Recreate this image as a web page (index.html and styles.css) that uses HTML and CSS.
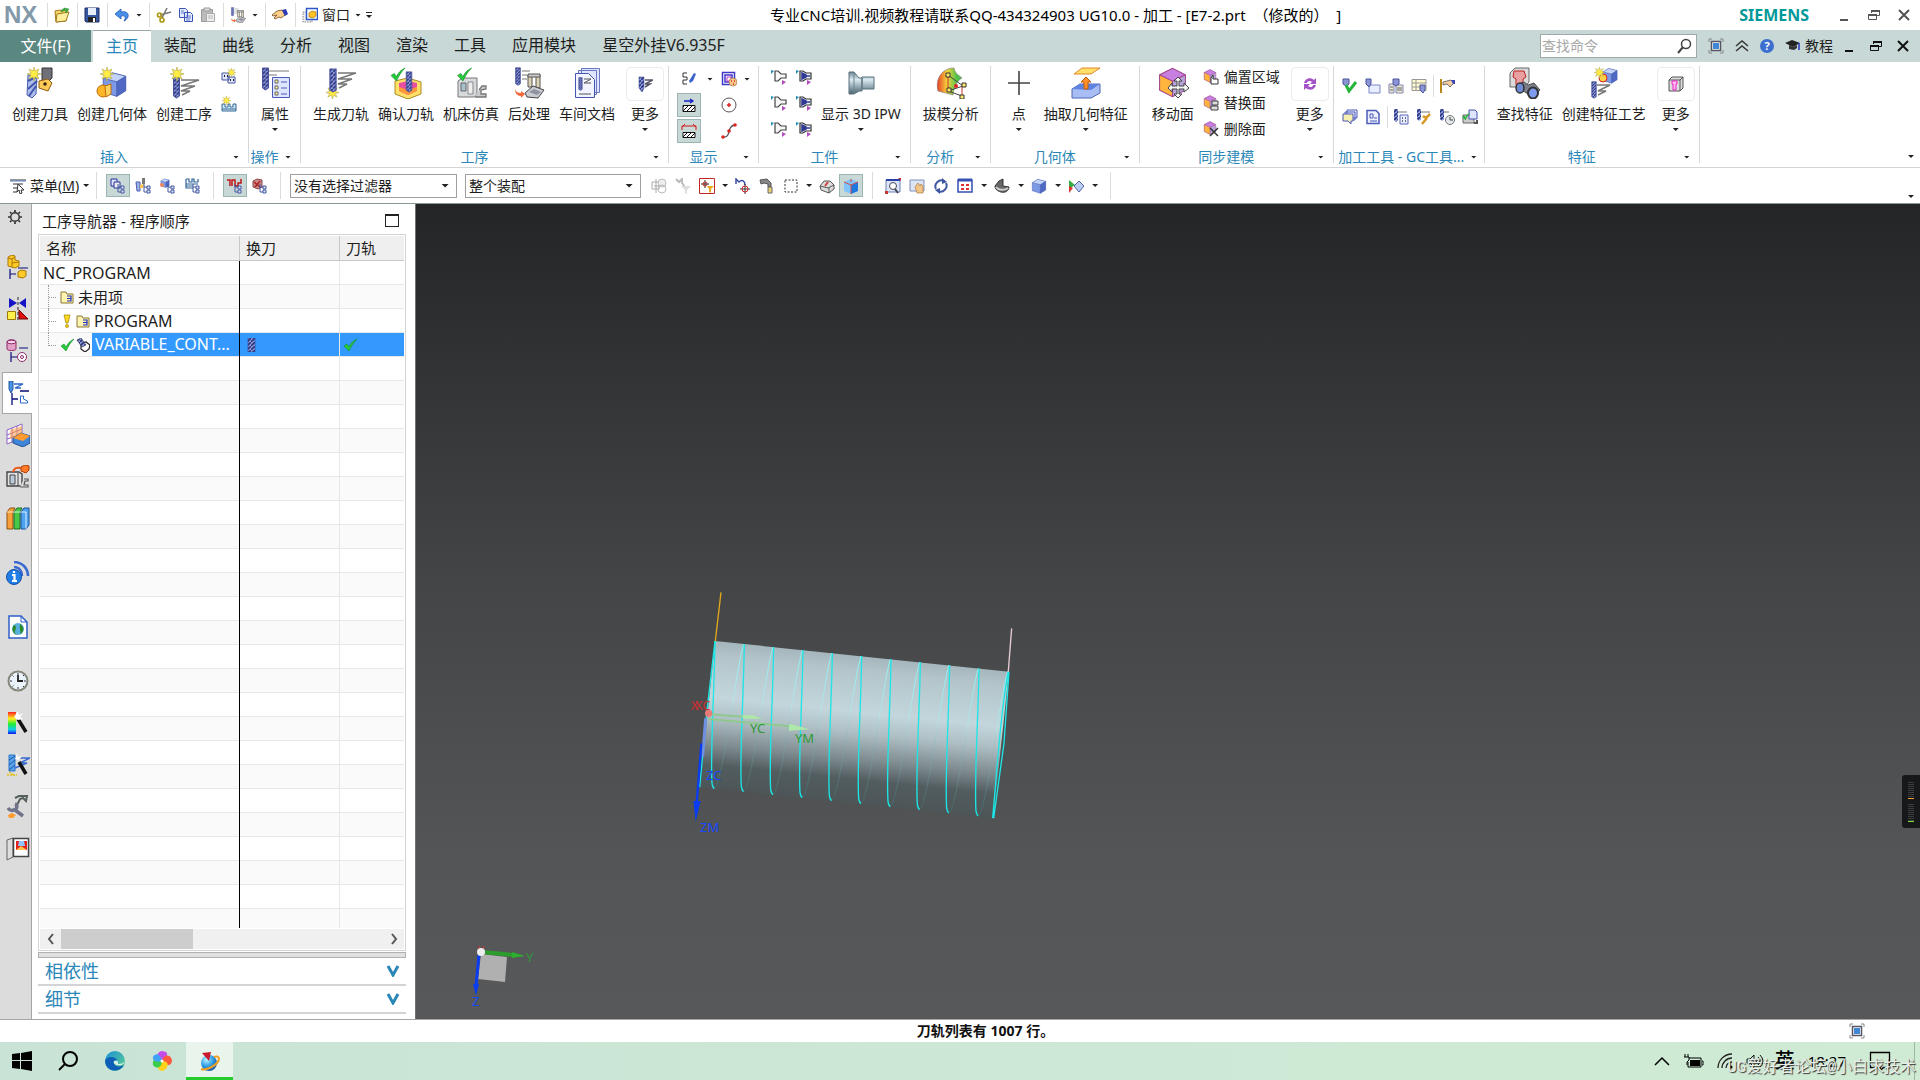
FILE: index.html
```html
<!DOCTYPE html>
<html lang="zh-CN">
<head>
<meta charset="utf-8">
<title>NX - 加工</title>
<link rel="stylesheet" href="styles.css">
</head>
<body>
<svg class="defs" width="0" height="0" aria-hidden="true">
<defs>
<pattern id="hatch" width="4" height="4" patternUnits="userSpaceOnUse"><rect width="4" height="4" fill="#8f9ad8"/><path d="M0 4L4 0" stroke="#29357f" stroke-width="1.6"/></pattern>
<pattern id="diag" width="4" height="4" patternUnits="userSpaceOnUse"><path d="M-1 5L5 -1M-1 1L1 -1M3 5L5 3" stroke="#111" stroke-width="1"/></pattern>
<linearGradient id="rain" x1="0" x2="1"><stop offset="0" stop-color="#e8402a"/><stop offset=".4" stop-color="#f5d53a"/><stop offset=".8" stop-color="#4fc04a"/></linearGradient>
<linearGradient id="rainv" x1="0" x2="0" y1="0" y2="1"><stop offset="0" stop-color="#f22"/><stop offset=".3" stop-color="#fe2"/><stop offset=".55" stop-color="#2e3"/><stop offset=".8" stop-color="#1ce"/><stop offset="1" stop-color="#11e"/></linearGradient>
<linearGradient id="steel" x1="0" x2="0" y1="0" y2="1"><stop offset="0" stop-color="#6b8593"/><stop offset=".35" stop-color="#dcebf1"/><stop offset="1" stop-color="#486471"/></linearGradient>
<radialGradient id="ball" cx=".35" cy=".3" r=".8"><stop offset="0" stop-color="#bdf3ff"/><stop offset=".5" stop-color="#2f9fe6"/><stop offset="1" stop-color="#12469c"/></radialGradient>
<linearGradient id="body" gradientUnits="userSpaceOnUse" x1="165" y1="213" x2="120" y2="652"><stop offset="0" stop-color="#a4b6bc"/><stop offset=".1" stop-color="#b3c5cb"/><stop offset=".38" stop-color="#c2d6db"/><stop offset=".52" stop-color="#afc0c5"/><stop offset=".7" stop-color="#7f8c90"/><stop offset=".84" stop-color="#525d60"/><stop offset="1" stop-color="#4d5557"/></linearGradient>
<linearGradient id="back" x1="0" x2="0" y1="0" y2="1"><stop offset="0" stop-color="#8cf3f3"/><stop offset=".4" stop-color="#b4e3e6"/><stop offset=".55" stop-color="#8fb5b9" stop-opacity=".5"/><stop offset="1" stop-color="#3f8184" stop-opacity=".4"/></linearGradient>
<linearGradient id="edgeg" x1="0" x2="1" y1="0" y2="1"><stop offset="0" stop-color="#1b8fd8"/><stop offset="1" stop-color="#5fd38a"/></linearGradient>
</defs>
<symbol id="star" viewBox="0 0 14 14"><path d="M7 0l1 4 4-2-2 4 4 1-4 1 2 4-4-2-1 4-1-4-4 2 2-4-4-1 4-1-2-4 4 2z" fill="#ffec45" stroke="#b0a34e" stroke-width=".6"/></symbol>
<symbol id="check" viewBox="0 0 14 14"><path d="M1 8l3-2 2 3c2-4 4-6 8-8-4 4-6 8-8 12z" fill="#22cc3a" stroke="#178c28" stroke-width=".6"/></symbol>
<symbol id="mill" viewBox="0 0 8 24"><path d="M1 1h6v20l-3 2-3-2z" fill="url(#hatch)" stroke="#4a549b"/></symbol>
<symbol id="lines" viewBox="0 0 20 18"><path d="M1 2h18L1 8h14L1 13h9L2 17" fill="none" stroke="#777" stroke-width="1.4"/></symbol>
<symbol id="cube" viewBox="0 0 24 24"><path d="M2 7l8-5 12 3v13l-8 5-12-4z" fill="#7d99e6"/><path d="M2 7l8-5 12 3-8 5z" fill="#c3d3fa"/><path d="M14 10l8-5v13l-8 5z" fill="#4e68c4"/><path d="M2 7l8-5 12 3v13l-8 5-12-4zM2 7l12 3 8-5M14 10v13" fill="none" stroke="#4c61ad" stroke-width=".8"/></symbol>
<symbol id="facecube" viewBox="0 0 24 24"><path d="M2 6l10-5 10 5v12l-10 5-10-5z" fill="#b5a3d9"/><path d="M2 6l10-5 10 5-10 5z" fill="#c77fe0"/><path d="M2 6l10 5v12l-10-5z" fill="#ffb43d"/><path d="M2 6l10-5 10 5v12l-10 5-10-5zM2 6l10 5 10-5M12 11v12" fill="none" stroke="#a1448c" stroke-width=".8"/></symbol>
<symbol id="node" viewBox="0 0 16 16"><path d="M8 6v8h3M8 9h3" fill="none" stroke="#45599f"/><path d="M11 8h3v3h-3zM11 12h3v3h-3z" fill="#dbe3ff" stroke="#45599f"/></symbol>
<symbol id="open" viewBox="0 0 16 16"><path d="M1 4l5-1 2 1 5-1-1 11-10 1z" fill="#f7d66a" stroke="#a4781d"/><path d="M3 7l12-2-3 9-10 1z" fill="#ffef9c" stroke="#a4781d"/><path d="M7 5c0-3 3-4 4-3l-1-1 5 1-3 4V4c-2-1-3 0-5 1z" fill="#3fb341" stroke="#27822b" stroke-width=".5"/></symbol>
<symbol id="save" viewBox="0 0 16 16"><path d="M1 1h14v14H2l-1-1z" fill="#35589f" stroke="#1c2f66"/><path d="M4 1h8v7H4z" fill="#e8eef9"/><path d="M4 10h8v5H4z" fill="#222"/><path d="M9 11h2v4H9z" fill="#fff"/></symbol>
<symbol id="undo" viewBox="0 0 16 16"><path d="M1 7l6-5v3c5-1 8 1 7 5-1 2-3 4-4 4 2-3 2-6-3-5v3z" fill="#4a90e8" stroke="#1e55b0" stroke-width=".8"/></symbol>
<symbol id="cut" viewBox="0 0 16 16"><path d="M11 1L6 11M15 5L4 8" stroke="#777" stroke-width="1.6"/><circle cx="3.500" cy="8" r="2" fill="none" stroke="#b19a18" stroke-width="1.700"/><circle cx="6" cy="13" r="2" fill="none" stroke="#b19a18" stroke-width="1.700"/></symbol>
<symbol id="copy" viewBox="0 0 16 16"><path d="M1.500 1.500h6l2 2v7h-8zM6.500 5.500h6l2 2v7h-8z" fill="#e6ecff" stroke="#3a55b4"/><path d="M8 9h5M8 11h5M8 13h4M3 4h3M3 6h3" stroke="#5c77cc"/></symbol>
<symbol id="paste" viewBox="0 0 16 16"><path d="M1.500 2.500h11v12h-11z" fill="#bbb" stroke="#999"/><path d="M4 1h6v3H4z" fill="#ddd" stroke="#999"/><path d="M6.500 6.500h8v8h-8z" fill="#eee" stroke="#aaa"/><path d="M8 9h5M8 11h5" stroke="#bbb"/></symbol>
<symbol id="post" viewBox="0 0 32 32"><use href="#mill" x="1" y="0" width="8" height="19"/><path d="M9 4h8M9 8h5M9 12h5" stroke="#777"/><path d="M2 22c1 3 3 4 6 4v-2l4 3-4 4v-2c-4 0-6-3-6-7z" fill="#f4683a"/><path d="M15 8h4v12h-4zM23 8h4v13h-4z" fill="#ddd4b8" stroke="#555"/><path d="M15 7h12v3H15z" fill="#ccc" stroke="#555"/><path d="M12 26l8-7 11 4-6 8-11-1z" fill="#c9cbd2" stroke="#444"/><path d="M16 25l5-3 7 3-4 3z" fill="#8f939e"/></symbol>
<symbol id="hand" viewBox="0 0 16 16"><path d="M0 8l5-4 5-1 3 5-4 3-2-1-4 2-1-1 3-3-4 1z" fill="#ffcf8c" stroke="#6d4a20" stroke-width=".8"/><path d="M10 3l4-1 2 5-3 2z" fill="#2b3bb5"/></symbol>
<symbol id="win" viewBox="0 0 16 16"><path d="M1 5h9v10H1z" fill="#eee" stroke="#888" stroke-dasharray="1.500 1"/><path d="M4.500 1.500h11v11h-11z" fill="#fff" stroke="#2e57c8" stroke-width="1.500"/><path d="M7 6l3-2 4 1v4l-3 2-4-1z" fill="#ffc425" stroke="#a97308" stroke-width=".7"/></symbol>
<symbol id="restore" viewBox="0 0 14 12"><path d="M4.500 4V1.500h8v5H9M1.500 5.500h8v5h-8z" fill="none" stroke="currentColor"/><path d="M4 2h9M1 6h9" stroke="currentColor" stroke-width="2"/></symbol>
<symbol id="close" viewBox="0 0 12 12"><path d="M1 1l10 10M11 1L1 11" stroke="currentColor" stroke-width="2"/></symbol>
<symbol id="full" viewBox="0 0 16 16"><path d="M1 4V1h3M12 1h3v3M15 12v3h-3M4 15H1v-3" fill="none" stroke="#888"/><path d="M3.500 3.500h9v9h-9z" fill="#fff" stroke="#556" stroke-width="1.500"/><path d="M5 5h6v6H5z" fill="#3f86d4"/></symbol>
<symbol id="tool" viewBox="0 0 32 32"><path d="M18 1h10v10l-3 3h-7z" fill="#6f7078" stroke="#333"/><path d="M15 14l9-2 4 4-4 8-9-3z" fill="#ffcb58" stroke="#8c5a12"/><circle cx="21" cy="17" r="1.800" fill="#3a2a12"/><path d="M4 8h9l-1 19-4 4-5-3z" fill="#aebeea" stroke="#4a5cae"/><path d="M4 14l8-4M4 22l9-8M5 29l7-10" stroke="#3e54ad" stroke-width="2"/><use href="#star" x="3" y="0" width="14" height="14"/></symbol>
<symbol id="geom" viewBox="0 0 32 32"><use href="#cube" x="5" y="3" width="27" height="28"/><circle cx="7" cy="24" r="6" fill="#ffb52a" stroke="#bd6b0b"/><path d="M9 19l6-2v10l-5 3z" fill="#ffd362" stroke="#bd6b0b"/><use href="#star" x="4" y="0" width="14" height="14"/></symbol>
<symbol id="oper" viewBox="0 0 32 32"><use href="#mill" x="4" y="8" width="9" height="24"/><use href="#lines" x="12" y="11" width="20" height="18"/><use href="#star" x="2" y="0" width="14" height="14"/></symbol>
<symbol id="sm1" viewBox="0 0 16 16"><path d="M1 5h7v7H1zM7 9h7v6H7z" fill="#dfe6fb" stroke="#46599f"/><path d="M3 8h1m2 0h1M9 12h1m2 0h1" stroke="#223" stroke-width="2"/><use href="#star" x="6" y="0" width="9" height="9"/></symbol>
<symbol id="sm2" viewBox="0 0 16 16"><path d="M1 8h3v3h3V8h2v3h3V8h3v7H1z" fill="#cfe7f3" stroke="#356b96"/><path d="M1 13h14" stroke="#356b96"/><use href="#star" x="1" y="0" width="9" height="9"/></symbol>
<symbol id="props" viewBox="0 0 32 32"><use href="#mill" x="2" y="0" width="9" height="24"/><path d="M10 4h20M10 8h8" stroke="#777"/><path d="M13.500 10.500h17v20h-17z" fill="#dfe5ff" stroke="#4b5bb8"/><path d="M16 13h3v3h-3zM16 19h3v3h-3zM16 25h3v3h-3z" fill="#fff3a0" stroke="#666"/><path d="M22 15h6M22 21h6M22 27h6" stroke="#4b5bb8"/></symbol>
<symbol id="gen" viewBox="0 0 32 32"><use href="#star" x="1" y="19" width="13" height="13"/><use href="#mill" x="3" y="1" width="10" height="25"/><use href="#lines" x="12" y="4" width="20" height="18"/></symbol>
<symbol id="verify" viewBox="0 0 32 32"><path d="M5 14l13-3 13 4v12l-13 5-13-5z" fill="#ffe169" stroke="#a98a22"/><path d="M9 16l9-2 9 2v8l-9 4-9-4z" fill="#e84fa0"/><path d="M9 20l9 3 9-3v4l-9 4-9-4z" fill="#ff9a34"/><use href="#mill" x="15" y="4" width="8" height="22"/><use href="#check" x="0" y="0" width="15" height="15"/></symbol>
<symbol id="sim" viewBox="0 0 32 32"><path d="M3 14l4-3h15v17l-3 2H3z" fill="#d6dadc" stroke="#777"/><path d="M6 16h5v8H6z" fill="#a9c1cc" stroke="#666"/><path d="M13 15h5v12h-5z" fill="#eee" stroke="#888"/><path d="M20 30h11v-3h-5v-4l5-1v-3h-4l-3 4" fill="#ccc" stroke="#777" stroke-width="1.300"/><use href="#check" x="1" y="0" width="16" height="15"/></symbol>
<symbol id="doc" viewBox="0 0 32 32"><path d="M10.500 1.500h18v24h-18zM7.500 3.500h18v24h-18z" fill="#dfe5ff" stroke="#6a78c4"/><path d="M4.500 6.500h13l6 6v18h-19z" fill="#f2f4ff" stroke="#4454b0"/><use href="#mill" x="7" y="10" width="5" height="14"/><path d="M13 12h7l-7 4h7M8 27h12" fill="none" stroke="#555"/></symbol>
<symbol id="more1" viewBox="0 0 16 16"><path d="M2 1h5v11l-2 4-3-4z" fill="url(#hatch)" stroke="#4a549b" stroke-width=".6"/><path d="M8 4h8l-8 4h5l-5 3" fill="none" stroke="#556" stroke-width="1.500"/></symbol>
<symbol id="edit" viewBox="0 0 16 16"><path d="M6 2H2v4h4v3H2v4h4" fill="none" stroke="#333"/><path d="M8 10l5-8 2 1-3 7-3 2z" fill="#3d65cf"/></symbol>
<symbol id="palette" viewBox="0 0 16 16"><path d="M1.500 1.500h12v12h-12zM4 4h7v7H4z" fill="#fff" stroke="#4037c9" stroke-width="1.500"/><path d="M6 6h4v4H6z" fill="none" stroke="#c23cc0"/><circle cx="12" cy="11" r="4" fill="#f5c98a" stroke="#a06b35" stroke-width=".6"/><path d="M10 10h1m2 0h1m-2 3h1" stroke="#d22" stroke-width="1.500"/></symbol>
<symbol id="tg1" viewBox="0 0 16 16"><path d="M2 8.500h12v6H2z" fill="#fff"/><path d="M2 8.500h12v6H2z" fill="url(#diag)" stroke="#111"/><path d="M3 4h9m-3-2l3 2-3 2" fill="none" stroke="#1622c8" stroke-width="1.300"/></symbol>
<symbol id="tg2" viewBox="0 0 16 16"><path d="M2 9.500h12v5H2z" fill="#fff"/><path d="M2 9.500h12v5H2z" fill="url(#diag)" stroke="#111"/><path d="M1 7V3h14v4M4 1L1 4M12 1l3 3" fill="none" stroke="#d01818"/></symbol>
<symbol id="circ" viewBox="0 0 16 16"><circle cx="8" cy="8" r="7" fill="none" stroke="#555"/><path d="M8 6v4M6 8h4" stroke="#d22" stroke-width="1.500"/></symbol>
<symbol id="curve" viewBox="0 0 16 16"><path d="M2 14c9 1 3-11 12-12" fill="none" stroke="#555" stroke-width="1.300"/><circle cx="2" cy="14" r="1.800" fill="#d22"/><circle cx="8" cy="8" r="1.800" fill="#d22"/><circle cx="14" cy="2" r="1.800" fill="#d22"/></symbol>
<symbol id="wp" viewBox="0 0 16 16"><path d="M4 2h3l3 3h5v4h-5l-3 3H4z" fill="#f7f7f7" stroke="#444" stroke-width="1.200"/><path d="M0 1l3 1-3 3z" fill="#278eb8"/><path d="M11 11l4 2-4 3z" fill="#b44bc0"/></symbol>
<symbol id="wp2" viewBox="0 0 16 16"><path d="M4 2h3l3 2h5v6h-5l-3 2H4z" fill="#f2f4fb" stroke="#333" stroke-width="1.200"/><path d="M6 4l4 2v2l-4 2zM10 7h4" fill="#303a94" stroke="#303a94" stroke-width="1.500"/><path d="M0 1l3 1-3 3z" fill="#278eb8"/><path d="M11 11l4 2-4 3z" fill="#b44bc0"/></symbol>
<symbol id="ipw" viewBox="0 0 32 32"><path d="M4 5h5l5 6h3v13h-3l-5 3H4zM17 10h12v12H17z" fill="url(#steel)" stroke="#59717c"/><path d="M9 5v22M17 10v13" stroke="#71878f"/></symbol>
<symbol id="draft" viewBox="0 0 32 32"><path d="M3 24C0 12 7 1 19 1c1 6 6 8 8 10-5 3-8 8-9 17z" fill="url(#rain)" stroke="#777" stroke-width=".6"/><path d="M13 8l15 11-15 5 14 5" fill="none" stroke="#444"/><path d="M13 8v16M27 19v10" stroke="#c33"/><path d="M11 6h4v4h-4zM27 16h4v4h-4zM12 21h4v4h-4zM25 28h4v4h-4z" fill="#ffec6b" stroke="#333"/><circle cx="21" cy="19" r="2" fill="#d22"/></symbol>
<symbol id="plus" viewBox="0 0 32 32"><path d="M16 4v24M5 16h22" stroke="#444" stroke-width="1.600"/></symbol>
<symbol id="extract" viewBox="0 0 32 32"><path d="M4 7l8-6h18l-9 6z" fill="#ffe169" stroke="#e0852c"/><path d="M2 22l8-5h20v9l-9 5H2z" fill="#a9bdf5" stroke="#4a66b5"/><path d="M2 22l8-5h20l-9 6z" fill="#5f83e0"/><path d="M14 22v-7h-3l5-5 5 5h-3v7z" fill="#ff8e2b" stroke="#bf5a0a"/></symbol>
<symbol id="move" viewBox="0 0 32 32"><use href="#facecube" x="0" y="0" width="31" height="31"/><path d="M21 10l4 4h-3v5h5v-3l5 5-5 4v-3h-5v5h3l-4 4-4-4h3v-5h-5v3l-4-4 4-5v3h5v-5h-3z" fill="#f4f4f4" stroke="#444"/></symbol>
<symbol id="off" viewBox="0 0 16 16"><use href="#facecube" x="0" y="0" width="14" height="14"/><path d="M8 15V9l2-3v4h5v5z" fill="#fff" stroke="#333"/></symbol>
<symbol id="repl" viewBox="0 0 16 16"><use href="#facecube" x="0" y="0" width="14" height="14"/><path d="M9 6h6v4H9zM8 11h7v4H8z" fill="#ddd" stroke="#444"/></symbol>
<symbol id="del" viewBox="0 0 16 16"><use href="#facecube" x="0" y="0" width="14" height="14"/><path d="M7 7l8 8M15 7l-8 8" stroke="#333" stroke-width="1.500"/></symbol>
<symbol id="sync" viewBox="0 0 16 16"><path d="M2 7c1-5 7-6 10-3l2-2v6H8l2-2C8 4 5 5 5 7zM14 9c-1 5-7 6-10 3l-2 2V8h6l-2 2c2 2 5 1 5-1z" fill="#a552c6"/></symbol>
<symbol id="g1" viewBox="0 0 16 16"><path d="M1 1h6v5L4 8 1 6z" fill="#8b95d6" stroke="#4a549b"/><path d="M4 7l3 6 7-9" fill="none" stroke="#25b53a" stroke-width="3"/></symbol>
<symbol id="g2" viewBox="0 0 16 16"><path d="M4 7h11v8H4z" fill="#e8edff" stroke="#7a87c7"/><path d="M1 1h5v5L4 9 1 6z" fill="#8b95d6" stroke="#4a549b"/></symbol>
<symbol id="g3" viewBox="0 0 16 16"><path d="M1 6h5v9H1zM8 7h7v8H8z" fill="#eee9cf" stroke="#7f86b5"/><path d="M2 9h3M2 12h3M9 10h5M9 12h5" stroke="#667"/><path d="M5 1h6v5L8 8 5 6z" fill="#8b95d6" stroke="#4a549b"/></symbol>
<symbol id="g4" viewBox="0 0 16 16"><path d="M1 1.500h14v11H1zM1 5h14M1 9h14M5 2v11" fill="#fff9cf" stroke="#999"/><path d="M9 7h5v5l-2 3-3-3z" fill="#8b95d6" stroke="#4a549b"/></symbol>
<symbol id="g5" viewBox="0 0 16 16"><path d="M2 1v14" stroke="#b88616" stroke-width="2"/><path d="M4 4l8-2 3 3-4 4-3-3-4 1z" fill="#f3cda0" stroke="#555" stroke-width=".8"/><path d="M12 2l4 0v4h-2z" fill="#3b49b8"/></symbol>
<symbol id="g6" viewBox="0 0 16 16"><path d="M5 1h10v8H5zM3 3h10v8H3z" fill="#eef" stroke="#4b5bb8"/><path d="M1 5h10v7H9v3l-3-3H1z" fill="#f5efb0" stroke="#4b5bb8"/></symbol>
<symbol id="g7" viewBox="0 0 16 16"><path d="M2 1.500h9l3 3v10H2z" fill="#eef0ff" stroke="#4b5bb8" stroke-width="1.500"/><path d="M5 5h3v4H5zM9 9h3M5 12h7" fill="none" stroke="#4b5bb8"/></symbol>
<symbol id="g8" viewBox="0 0 16 16"><path d="M1 0h4v11l-2 2-2-2z" fill="url(#hatch)"/><path d="M5 3h9" stroke="#777"/><path d="M7 6h8v9H7z" fill="#e8edff" stroke="#5b69b8"/><path d="M9 9h1m2 0h1M9 12h1m2 0h1" stroke="#445" stroke-width="1.500"/></symbol>
<symbol id="g9" viewBox="0 0 16 16"><path d="M1 0h4v10l-2 2-2-2z" fill="url(#hatch)"/><path d="M5 3h9" stroke="#777"/><path d="M7 7c3 3 5 0 7-2M11 9l-5 6" fill="none" stroke="#d79a28" stroke-width="2.500"/></symbol>
<symbol id="g10" viewBox="0 0 16 16"><path d="M1 0h4v10l-2 2-2-2z" fill="url(#hatch)"/><path d="M5 3h5" stroke="#777"/><circle cx="11" cy="11" r="4.500" fill="#e4eaec" stroke="#777"/><path d="M11 8v3h3" fill="none" stroke="#444"/></symbol>
<symbol id="g11" viewBox="0 0 16 16"><path d="M1 6h11v8H1z" fill="#ccc" stroke="#666"/><path d="M7 1h6l2 2v7H7z" fill="#dfe5ff" stroke="#4454b0"/><use href="#check" x="0" y="3" width="8" height="9"/><path d="M12 14h3v-3" fill="none" stroke="#555" stroke-width="2"/></symbol>
<symbol id="find" viewBox="0 0 32 32"><path d="M1 6l5-5h14v14l-4 5H1z" fill="#dadada" stroke="#666"/><path d="M5 4h10l2 6-3 2v6H7v-6l-3-2z" fill="#e9a0a0" stroke="#b22"/><path d="M9 17l6-2 4 3 6-2 6 7-8 7-7-5-6-2z" fill="#7c808c" stroke="#333" stroke-width=".8"/><ellipse cx="11" cy="21" rx="4" ry="5" fill="#6f8bd6" stroke="#333" stroke-width="1.500"/><ellipse cx="24" cy="26" rx="5" ry="5.500" fill="#7f9bf0" stroke="#333" stroke-width="2"/></symbol>
<symbol id="craft" viewBox="0 0 32 32"><use href="#mill" x="2" y="14" width="8" height="18"/><path d="M9 18h13l-12 6h8l-8 4" fill="none" stroke="#777" stroke-width="1.400"/><use href="#cube" x="13" y="0" width="18" height="17"/><circle cx="15" cy="11" r="4" fill="#ffd04a" stroke="#c22"/><use href="#star" x="6" y="0" width="11" height="11"/></symbol>
<symbol id="feat" viewBox="0 0 16 16"><path d="M1 4l3-3h11v11l-3 3H1z" fill="#ddd" stroke="#555"/><path d="M12 4v11M1 4h11l3-3" fill="none" stroke="#555"/><path d="M4 5h5v3H8v6H5V8H4z" fill="#fbe" stroke="#e2c"/></symbol>
<symbol id="menu" viewBox="0 0 16 16"><path d="M0 2h16M3 6h10M3 10h4M3 14h4" stroke="#777" stroke-width="1.600"/><path d="M0 3h16" stroke="#5b84c9"/><path d="M8 6l6 6h-3l1 3-2 1-1-4-2 2z" fill="#fff" stroke="#333"/></symbol>
<symbol id="s1" viewBox="0 0 16 16"><path d="M1 1h6v7H1z" fill="#dfe5ff" stroke="#26309b"/><path d="M4 4h6v6H4z" fill="#eee" stroke="#26309b"/><use href="#node"/></symbol>
<symbol id="s2" viewBox="0 0 16 16"><path d="M7 0h3v6H7z" fill="#777"/><path d="M1 4h4v9H2z" fill="#9fb3e8" stroke="#4a5cae"/><path d="M5 7l4-1-1 4H5z" fill="#ffc44f"/><use href="#node" x="1" y="0" width="16" height="16"/></symbol>
<symbol id="s3" viewBox="0 0 16 16"><use href="#cube" x="0" y="0" width="10" height="10"/><circle cx="2" cy="7" r="2" fill="#f08a5a"/><use href="#node"/></symbol>
<symbol id="s4" viewBox="0 0 16 16"><path d="M1 1h3v3h3V1h2v3h4V1M1 1v9h7M1 6h12M1 8h7" fill="none" stroke="#30629a" stroke-width="1.200"/><use href="#node"/></symbol>
<symbol id="s5" viewBox="0 0 16 16"><path d="M0 2h3v6M5 8V2h3v6h3V5h3V1" fill="none" stroke="#c01616" stroke-width="1.500"/><use href="#node"/></symbol>
<symbol id="s6" viewBox="0 0 16 16"><path d="M1 3l4-2 5 1v7l-4 2-5-2z" fill="#c98a8a" stroke="#8a4a4a"/><path d="M2 4l6 5M8 3L3 9" stroke="#a22" stroke-width="1.500"/><use href="#node"/></symbol>
<symbol id="s7" viewBox="0 0 16 16"><path d="M5 1v14M1 4h7v7H1zM3 8h10" fill="none" stroke="#aaa"/><circle cx="11" cy="5" r="4" fill="#eee" stroke="#bbb"/><circle cx="11" cy="11" r="4" fill="none" stroke="#bbb"/></symbol>
<symbol id="s8" viewBox="0 0 16 16"><path d="M1 1l3 3 3-3v4l3 4" fill="none" stroke="#bbb" stroke-width="2"/><path d="M6 8h10l-4 4v4l-2-1v-3z" fill="#ddd"/></symbol>
<symbol id="s9" viewBox="0 0 16 16"><path d="M.500.500h15v15H.500z" fill="#fff" stroke="#c22828"/><path d="M6 2v8M2 6h8" stroke="#333"/><circle cx="6" cy="6" r="2" fill="none" stroke="#c22"/><path d="M8 8h7l-3 3v4l-2-1v-3z" fill="#e9a91f"/></symbol>
<symbol id="s10" viewBox="0 0 16 16"><path d="M1 6V1l3 3c3-3 6-1 6 3" fill="none" stroke="#3b4da3" stroke-width="1.500"/><path d="M10 6v10M5 11h10" stroke="#333"/><circle cx="10" cy="11" r="3" fill="none" stroke="#c22"/></symbol>
<symbol id="s11" viewBox="0 0 16 16"><path d="M1 2l7-1 4 4v4H9V6L5 5 2 6z" fill="#888" stroke="#555"/><path d="M9 9h4v6H9z" fill="#e8d075" stroke="#666"/></symbol>
<symbol id="s12" viewBox="0 0 16 16"><path d="M2 2h12v12H2z" fill="none" stroke="#333" stroke-dasharray="2 1.500"/></symbol>
<symbol id="s13" viewBox="0 0 16 16"><path d="M1 8l4-5h6l4 4v4l-5 4-8-3z" fill="#ddd" stroke="#555"/><path d="M1 8l8 2 6-3M10 10v5" fill="none" stroke="#555"/><path d="M9 4l-3 4" stroke="#c44" stroke-width="2"/></symbol>
<symbol id="s14" viewBox="0 0 16 16"><path d="M1 4l7-3 7 3v9l-7 3-7-3z" fill="#7fc4fa"/><path d="M8 7l7-3v9l-7 3z" fill="#1f78e0"/><path d="M1 4l7 3 7-3M8 7v9M8 1v3" fill="none" stroke="#d34a4a"/></symbol>
<symbol id="v1" viewBox="0 0 16 16"><path d="M1 2h14v12H1z" fill="#dbe6f8" stroke="#6a7fb5"/><circle cx="8" cy="8" r="3.500" fill="#fff" stroke="#445"/><path d="M10 11l3 4" stroke="#445" stroke-width="2"/><path d="M0 13h3v3H0zM13 0h3v3" fill="#c33"/><path d="M1 2h14" stroke="#2b3fa6" stroke-width="2"/></symbol>
<symbol id="v2" viewBox="0 0 16 16"><path d="M1 2h14v11H1z" fill="#dce4f4" stroke="#7f8fb8"/><path d="M6 9l2 6h6V8l-2-2-1 2-2-3z" fill="#f1c588" stroke="#a9793d" stroke-width=".7"/></symbol>
<symbol id="v3" viewBox="0 0 16 16"><path d="M3 11a6 6 0 0 1 8-8M13 5a6 6 0 0 1-8 8" fill="none" stroke="#3f57a4" stroke-width="2"/><path d="M9 0l5 4-5 2zM7 10l-5 2 5 4z" fill="#3f57a4"/></symbol>
<symbol id="v4" viewBox="0 0 16 16"><path d="M1 2h14v12H1z" fill="#fff" stroke="#3550b0" stroke-width="1.500"/><path d="M1 2h14" stroke="#3550b0" stroke-width="3"/><path d="M4 6h3v2H4zM9 6h3v2H9zM4 10h3v2H4zM9 10h3v2H9z" fill="#d33"/></symbol>
<symbol id="v5" viewBox="0 0 16 16"><path d="M9 1v7l6 1c0 4-4 6-8 5s-6-3-6-6l4-5z" fill="#666" stroke="#333"/><path d="M2 9c2 3 8 4 12 1" fill="none" stroke="#ccc" stroke-width="2"/></symbol>
<symbol id="v6" viewBox="0 0 16 16"><use href="#cube"/></symbol>
<symbol id="v7" viewBox="0 0 16 16"><path d="M1 2l6 5-6 4z" fill="#35ad44"/><path d="M1 8l4 2-4 5z" fill="#d33"/><path d="M6 8l5-5 5 5-5 6z" fill="#bccdf2" stroke="#4f63a5"/></symbol>
<symbol id="r1" viewBox="0 0 24 24"><path d="M12 13h10M4 14v10M4 19h6" stroke="#0b0b7a" stroke-width="1.200"/><path d="M2 2l4-2 3 1v4l4 1v5l-4 2-7-2z" fill="#ffc928" stroke="#a87808"/><path d="M2 3l4 1 3-2M6 4v8M6 8l7-1" fill="none" stroke="#a87808"/><path d="M12 17l3-2 5 1v5l-3 2-5-1z" fill="#ffc928" stroke="#a87808"/></symbol>
<symbol id="r2" viewBox="0 0 24 24"><path d="M12 0v24" stroke="#222" stroke-dasharray="3 2"/><path d="M3 1l8 5-8 5zM20 1l-7 5 7 5z" fill="#1515c5"/><path d="M1.500 14.500h8v8h-8z" fill="#fff04a" stroke="#a07a00"/><path d="M13 13l9 9h-9z" fill="#d11" stroke="#700"/></symbol>
<symbol id="r3" viewBox="0 0 24 24"><path d="M13 9h9M5 13v10M5 18h6" stroke="#0b0b7a" stroke-width="1.200"/><path d="M1 3c0-3 9-3 9 0v7c0 2-9 2-9 0z" fill="#e3a0c8" stroke="#8c2a68"/><ellipse cx="5.500" cy="3" rx="4.500" ry="1.800" fill="#f6d5e8" stroke="#8c2a68"/><circle cx="16" cy="18" r="4.500" fill="#fff" stroke="#8c2a68"/><circle cx="16" cy="18" r="1.500" fill="none" stroke="#8c2a68"/></symbol>
<symbol id="r4" viewBox="0 0 24 24"><path d="M2 0h4v8l-2 4-2-4z" fill="#4a93e0" stroke="#1d56a0"/><path d="M7 3h9l-8 4h6" fill="none" stroke="#2d66c8" stroke-width="1.300"/><path d="M13 10h9M5 12v12M5 18h6" stroke="#0b0b7a" stroke-width="1.300"/><path d="M13.500 15h3v3l4 2v2h-7z" fill="#fff" stroke="#2d66c8"/></symbol>
<symbol id="r5" viewBox="0 0 24 24"><path d="M1 7l15-6v14L1 21zM1 12l15-6M1 16l15-5M6 5v14M11 3v14" fill="#fff" stroke="#8a63c4"/><path d="M4 7l12-4v9L4 16z" fill="#ffa04b" opacity=".6"/><path d="M7 15l8-5 9 3v7l-7 4-10-4z" fill="#3f86d8" stroke="#22508f"/><path d="M7 15l8-5 9 3-7 5z" fill="#ff9b2f"/></symbol>
<symbol id="r6" viewBox="0 0 24 24"><path d="M1 7h12l3 2v12H1z" fill="#e2e2e2" stroke="#444" stroke-width="1.400"/><path d="M4 10h5v9H4zM12 8v13" fill="#bcd" stroke="#444"/><path d="M14 22h8v-2h-4l1-4h3v-2h-4" fill="#ddd" stroke="#555" stroke-width="1.200"/><path d="M7 7c1-4 4-5 8-4" fill="none" stroke="#ee5a1a" stroke-width="2"/><path d="M15 2l4-2 4 1v4l-3 3-5-2z" fill="#ff7a29" stroke="#b03c00"/></symbol>
<symbol id="r7" viewBox="0 0 24 24"><path d="M1 5l3-4h5L7 5v17H1z" fill="#f5a03a" stroke="#8e5310"/><path d="M8 5l3-4h5l-2 4v17H8z" fill="#47c848" stroke="#1d6f20"/><path d="M15 5l3-4h5v17l-3 4h-5z" fill="#4da3f0" stroke="#1b4e94"/><path d="M20 5v17M1 5h19" stroke="#fff" stroke-width=".8"/></symbol>
<symbol id="r8" viewBox="0 0 24 24"><path d="M8 6c5 0 8 4 8 9M8 1c8 0 14 6 14 14" fill="none" stroke="#3a69cf" stroke-width="2.500"/><circle cx="8" cy="16" r="7.500" fill="#1f7fe6" stroke="#1253a8"/><path d="M8 10v2M6 14h2.500v6M6 20h5" fill="none" stroke="#fff" stroke-width="2.200"/></symbol>
<symbol id="r9" viewBox="0 0 24 24"><path d="M3 1h12l6 6v16H3z" fill="#fff" stroke="#2f5fc7" stroke-width="1.500"/><path d="M15 1v6h6" fill="none" stroke="#2f5fc7"/><circle cx="12" cy="14" r="6" fill="#5ab0dc"/><path d="M8 10c3 1 2 4 1 6s1 3 2 4c-4-1-6-6-3-10zM14 9c4 2 5 7 0 10 1-3-1-6 0-10z" fill="#2e8a28"/></symbol>
<symbol id="r10" viewBox="0 0 24 24"><circle cx="12" cy="12" r="9.500" fill="#eaf3fb" stroke="#85877a" stroke-width="2"/><path d="M12 4v2M12 18v2M4 12h2M18 12h2M6.500 6.500l1 1M17 17l1 1M6.500 17.500l1-1M17 7l1-1" stroke="#334"/><path d="M12 6v6h5" fill="none" stroke="#222" stroke-width="1.800"/></symbol>
<symbol id="r11" viewBox="0 0 24 24"><path d="M2 1h8v22H2z" fill="url(#rainv)"/><path d="M12 8l8 13" stroke="#111" stroke-width="3.500"/><path d="M12 0l1 4 4-2-3 4 3 2-5 1-4-3z" fill="#fff"/></symbol>
<symbol id="r12" viewBox="0 0 24 24"><path d="M3 2h6v16H3z" fill="#5aa2ea" stroke="#2d76c8"/><path d="M3 7l6-4M3 12l6-5M3 17l6-5" stroke="#1d56a0"/><path d="M9 5h15l-10 5h7l-12 5" fill="none" stroke="#3a69cf" stroke-width="1.500"/><path d="M13 9l7 12" stroke="#111" stroke-width="3.500"/><path d="M1 22h10M3 19l6 4" stroke="#e0c020" stroke-width="1.500" stroke-dasharray="2 1"/><path d="M11 0l1 4 4-1-3 4-4-1z" fill="#fff"/></symbol>
<symbol id="r13" viewBox="0 0 24 24"><path d="M9 3l4-2h8l-1 5-3-3-3 1-4 8" fill="none" stroke="#56605a" stroke-width="2"/><path d="M9 9c3 1 2 5 0 6l8 6M2 13c2 3 5 3 7 1" fill="none" stroke="#70738a" stroke-width="3.500"/><path d="M2 20l4-2 4 2-3 3H3z" fill="#ff9b2f"/></symbol>
<symbol id="r14" viewBox="0 0 24 24"><path d="M1 3l6-2v19l-6 3z" fill="#ddd" stroke="#666"/><path d="M7.500 1.500h15v18h-15z" fill="#fff" stroke="#444" stroke-width="1.500"/><path d="M10 4h11v9H10z" fill="#e4221c"/><path d="M13 4h5l1 5h-7z" fill="#8fc4ff"/><path d="M10 13l5-4 6 4z" fill="#ffc04a"/></symbol>
<symbol id="gear" viewBox="0 0 14 14"><circle cx="7" cy="7" r="4.300" fill="none" stroke="#333" stroke-width="1.500"/><path d="M7 0v2M7 12v2M0 7h2M12 7h2M2 2l1.500 1.500M10.500 10.500L12 12M2 12l1.500-1.500M10.500 3.500L12 2" stroke="#333" stroke-width="1.700"/></symbol>
<symbol id="folder" viewBox="0 0 14 14"><path d="M1 2h5l1 2h6v9H1z" fill="#fff3b0" stroke="#8a7a30"/><path d="M7 6h4v5H7M7 8.500h4" fill="none" stroke="#1b2cc0" stroke-width="1.200"/></symbol>
</svg>

<header class="titlebar">
  <div class="quick">
    <span class="nx">NX</span><i class="sep"></i>
    <button aria-label="打开"><svg class="i16"><use href="#open"/></svg></button><i class="sep"></i>
    <button aria-label="保存"><svg class="i16"><use href="#save"/></svg></button><i class="sep"></i>
    <button aria-label="撤销"><svg class="i16"><use href="#undo"/></svg><i class="dd"></i></button><i class="sep"></i>
    <button aria-label="剪切"><svg class="i16"><use href="#cut"/></svg></button>
    <button class="next" aria-label="复制"><svg class="i16"><use href="#copy"/></svg></button>
    <button class="next" aria-label="粘贴"><svg class="i16"><use href="#paste"/></svg></button><i class="sep"></i>
    <button aria-label="后处理"><svg class="i16"><use href="#post"/></svg><i class="dd"></i></button><i class="sep"></i>
    <button aria-label="触控"><svg class="i16"><use href="#hand"/></svg></button><i class="sep"></i>
    <button class="window"><svg class="i16"><use href="#win"/></svg>窗口<i class="dd"></i></button>
    <button class="custom" aria-label="自定义"><i class="dd"></i></button>
  </div>
  <h1>专业CNC培训.视频教程请联系QQ-434324903 UG10.0 - 加工 - [E7-2.prt  （修改的）  ]</h1>
  <span class="brand">SIEMENS</span>
  <div class="controls">
    <button aria-label="最小化"><i class="min"></i></button>
    <button aria-label="还原"><svg width="14" height="12"><use href="#restore"/></svg></button>
    <button aria-label="关闭"><svg width="12" height="12"><use href="#close"/></svg></button>
  </div>
</header>

<nav class="tabs">
  <button class="file">文件(F)</button>
  <a href="#" class="on">主页</a><a href="#">装配</a><a href="#">曲线</a><a href="#">分析</a><a href="#">视图</a><a href="#">渲染</a><a href="#">工具</a><a href="#">应用模块</a><a href="#">星空外挂V6.935F</a>
  <div class="tabtools">
    <label class="search"><input type="text" placeholder="查找命令" aria-label="查找命令"><svg width="16" height="16"><circle cx="10" cy="6" r="4.500" fill="none" stroke="#444" stroke-width="1.500"/><path d="M7 9l-5 6" stroke="#444" stroke-width="2"/></svg></label>
    <button aria-label="全屏"><svg class="i16"><use href="#full"/></svg></button>
    <button aria-label="折叠"><svg width="14" height="12"><path d="M1 6l6-5 6 5M1 11l6-5 6 5" fill="none" stroke="#333" stroke-width="1.500"/></svg></button>
    <button aria-label="帮助" class="help">?</button>
    <button class="tutor"><svg class="i16"><path d="M0 5l7-3 8 3-7 4z" fill="#222"/><path d="M4 7v4l5 1 3-2V7L8 9z" fill="#333"/><path d="M14 5v7" stroke="#2233c4" stroke-width="1.500"/></svg>教程</button>
  </div>
  <div class="controls dark">
    <button aria-label="最小化窗口"><i class="min"></i></button>
    <button aria-label="还原窗口"><svg width="14" height="12"><use href="#restore"/></svg></button>
    <button aria-label="关闭窗口"><svg width="12" height="12"><use href="#close"/></svg></button>
  </div>
</nav>

<section class="ribbon">
  <div class="group"><div class="items">
    <button class="big"><svg><use href="#tool"/></svg>创建刀具</button>
    <button class="big"><svg><use href="#geom"/></svg>创建几何体</button>
    <button class="big"><svg><use href="#oper"/></svg>创建工序</button>
    <div class="stack"><button aria-label="创建程序"><svg class="i16"><use href="#sm1"/></svg></button><button aria-label="创建方法"><svg class="i16"><use href="#sm2"/></svg></button></div>
  </div><footer><span>插入</span><i class="dd"></i></footer></div>
  <div class="group"><div class="items">
    <button class="big"><svg><use href="#props"/></svg>属性<i class="dd"></i></button>
  </div><footer><span>操作</span><i class="dd"></i></footer></div>
  <div class="group endbox"><div class="items">
    <button class="big"><svg><use href="#gen"/></svg>生成刀轨</button>
    <button class="big"><svg><use href="#verify"/></svg>确认刀轨</button>
    <button class="big"><svg><use href="#sim"/></svg>机床仿真</button>
    <button class="big"><svg><use href="#post"/></svg>后处理</button>
    <button class="big"><svg><use href="#doc"/></svg>车间文档</button>
    <button class="big more"><span class="box"><svg class="i16"><use href="#more1"/></svg></span>更多<i class="dd"></i></button>
  </div><footer><span>工序</span><i class="dd"></i></footer></div>
  <div class="group narrow"><div class="items show">
    <button aria-label="编辑显示"><svg class="i16"><use href="#edit"/></svg></button><i class="dd"></i><button aria-label="颜色"><svg class="i16"><use href="#palette"/></svg></button><i class="dd"></i>
    <button class="on" aria-label="显示刀轨"><svg class="i16"><use href="#tg1"/></svg></button><i></i><button aria-label="中心"><svg class="i16"><use href="#circ"/></svg></button><i></i>
    <button class="on" aria-label="显示边界"><svg class="i16"><use href="#tg2"/></svg></button><i></i><button aria-label="曲线"><svg class="i16"><use href="#curve"/></svg></button><i></i>
  </div><footer><span>显示</span><i class="dd"></i></footer></div>
  <div class="group"><div class="items work">
    <div class="pairs">
      <button aria-label="工件 1"><svg class="i16"><use href="#wp"/></svg></button><button aria-label="工件 2"><svg class="i16"><use href="#wp2"/></svg></button>
      <button aria-label="工件 3"><svg class="i16"><use href="#wp"/></svg></button><button aria-label="工件 4"><svg class="i16"><use href="#wp2"/></svg></button>
      <button aria-label="工件 5"><svg class="i16"><use href="#wp"/></svg></button><button aria-label="工件 6"><svg class="i16"><use href="#wp2"/></svg></button>
    </div>
    <button class="big"><svg><use href="#ipw"/></svg>显示 3D IPW<i class="dd"></i></button>
  </div><footer><span>工件</span><i class="dd"></i></footer></div>
  <div class="group"><div class="items">
    <button class="big"><svg><use href="#draft"/></svg>拔模分析<i class="dd"></i></button>
  </div><footer><span>分析</span><i class="dd"></i></footer></div>
  <div class="group"><div class="items">
    <button class="big point"><svg><use href="#plus"/></svg>点<i class="dd"></i></button>
    <button class="big"><svg><use href="#extract"/></svg>抽取几何特征<i class="dd"></i></button>
  </div><footer><span>几何体</span><i class="dd"></i></footer></div>
  <div class="group endbox"><div class="items">
    <button class="big"><svg><use href="#move"/></svg>移动面</button>
    <div class="list">
      <button><svg class="i16"><use href="#off"/></svg>偏置区域</button>
      <button><svg class="i16"><use href="#repl"/></svg>替换面</button>
      <button><svg class="i16"><use href="#del"/></svg>删除面</button>
    </div>
    <button class="big more"><span class="box"><svg class="i16"><use href="#sync"/></svg></span>更多<i class="dd"></i></button>
  </div><footer><span>同步建模</span><i class="dd"></i></footer></div>
  <div class="group narrow tight"><div class="items gc">
    <div><button aria-label="检查"><svg class="i16"><use href="#g1"/></svg></button><button aria-label="刀具"><svg class="i16"><use href="#g2"/></svg></button><button aria-label="刀具列表"><svg class="i16"><use href="#g3"/></svg></button><button aria-label="刀具表"><svg class="i16"><use href="#g4"/></svg></button><i class="sep"></i><button aria-label="测量"><svg class="i16"><use href="#g5"/></svg></button></div>
    <div><button aria-label="注释"><svg class="i16"><use href="#g6"/></svg></button><button aria-label="文档"><svg class="i16"><use href="#g7"/></svg></button><i class="sep"></i><button aria-label="工序表"><svg class="i16"><use href="#g8"/></svg></button><button aria-label="工序工具"><svg class="i16"><use href="#g9"/></svg></button><button aria-label="工序时间"><svg class="i16"><use href="#g10"/></svg></button><button aria-label="机床检查"><svg class="i16"><use href="#g11"/></svg></button></div>
  </div><footer><span>加工工具 - GC工具...</span><i class="dd"></i></footer></div>
  <div class="group endbox"><div class="items">
    <button class="big"><svg><use href="#find"/></svg>查找特征</button>
    <button class="big"><svg><use href="#craft"/></svg>创建特征工艺</button>
    <button class="big more"><span class="box"><svg class="i16"><use href="#feat"/></svg></span>更多<i class="dd"></i></button>
  </div><footer><span>特征</span><i class="dd"></i></footer></div>
  <i class="dd last"></i>
</section>

<section class="selbar">
  <button class="menu"><svg class="i16"><use href="#menu"/></svg><span>菜单(<u>M</u>)</span><i class="dd"></i></button><i class="sep"></i>
  <div class="set spaced"><button class="on" aria-label="程序顺序视图"><svg class="i16"><use href="#s1"/></svg></button><button aria-label="机床视图"><svg class="i16"><use href="#s2"/></svg></button><button aria-label="几何视图"><svg class="i16"><use href="#s3"/></svg></button><button aria-label="加工方法视图"><svg class="i16"><use href="#s4"/></svg></button></div><i class="sep"></i>
  <div class="set spaced"><button class="on" aria-label="刀轨"><svg class="i16"><use href="#s5"/></svg></button><button aria-label="特征"><svg class="i16"><use href="#s6"/></svg></button></div><i class="sep"></i>
  <div class="picks">
    <label class="pick"><select aria-label="类型过滤器"><option>没有选择过滤器</option></select><i class="dd"></i></label>
    <label class="pick wide"><select aria-label="选择范围"><option>整个装配</option></select><i class="dd"></i></label>
  </div>
  <div class="set"><button aria-label="约束"><svg class="i16"><use href="#s7"/></svg></button><button aria-label="过滤"><svg class="i16"><use href="#s8"/></svg></button><button aria-label="点过滤"><svg class="i16"><use href="#s9"/></svg></button><i class="dd"></i><button aria-label="返回"><svg class="i16"><use href="#s10"/></svg></button><button aria-label="选择"><svg class="i16"><use href="#s11"/></svg></button><button aria-label="矩形"><svg class="i16"><use href="#s12"/></svg></button><i class="dd"></i><button aria-label="线框"><svg class="i16"><use href="#s13"/></svg></button><button class="on" aria-label="着色"><svg class="i16"><use href="#s14"/></svg></button></div><i class="sep"></i>
  <div class="set views"><button aria-label="缩放"><svg class="i16"><use href="#v1"/></svg></button><button aria-label="平移"><svg class="i16"><use href="#v2"/></svg></button><button aria-label="旋转"><svg class="i16"><use href="#v3"/></svg></button><button aria-label="布局"><svg class="i16"><use href="#v4"/></svg></button><i class="dd"></i><button aria-label="样式"><svg class="i16"><use href="#v5"/></svg></button><i class="dd"></i><button aria-label="视图方向"><svg class="i16"><use href="#v6"/></svg></button><i class="dd"></i><button aria-label="剖切"><svg class="i16"><use href="#v7"/></svg></button><i class="dd"></i></div><i class="sep"></i>
  <i class="dd last"></i>
</section>

<main>
  <nav class="rail">
    <button class="cog" aria-label="设置"><svg width="14" height="14"><use href="#gear"/></svg></button>
    <button aria-label="装配导航器"><svg><use href="#r1"/></svg></button>
    <button aria-label="约束导航器"><svg><use href="#r2"/></svg></button>
    <button aria-label="部件导航器"><svg><use href="#r3"/></svg></button>
    <button class="on" aria-label="工序导航器"><svg><use href="#r4"/></svg></button>
    <button aria-label="加工特征导航器"><svg><use href="#r5"/></svg></button>
    <button aria-label="机床导航器"><svg><use href="#r6"/></svg></button>
    <button aria-label="重用库"><svg><use href="#r7"/></svg></button>
    <button class="apart" aria-label="HD3D 工具"><svg><use href="#r8"/></svg></button>
    <button class="apart" aria-label="浏览器"><svg><use href="#r9"/></svg></button>
    <button class="apart" aria-label="历史记录"><svg><use href="#r10"/></svg></button>
    <button aria-label="系统材料"><svg><use href="#r11"/></svg></button>
    <button aria-label="加工向导"><svg><use href="#r12"/></svg></button>
    <button aria-label="角色"><svg><use href="#r13"/></svg></button>
    <button aria-label="系统场景"><svg><use href="#r14"/></svg></button>
  </nav>
  <aside class="panel">
    <header><h2>工序导航器 - 程序顺序</h2><button class="max" aria-label="最大化"></button></header>
    <div class="tree">
      <div class="rows">
        <table>
          <colgroup><col class="c1"><col class="c2"><col></colgroup>
          <thead><tr><th>名称</th><th>换刀</th><th>刀轨</th></tr></thead>
          <tbody>
            <tr><td class="latin">NC_PROGRAM</td><td></td><td></td></tr>
            <tr><td><div class="cell"><i class="branch"></i><svg><use href="#folder"/></svg><span>未用项</span></div></td><td></td><td></td></tr>
            <tr><td class="latin"><div class="cell"><i class="branch"></i><svg><path d="M4 1h6L8 9H6z" fill="#ffd91c" stroke="#9a8000" stroke-width=".7"/><circle cx="7" cy="12" r="1.500" fill="#ffd91c" stroke="#9a8000" stroke-width=".7"/></svg><svg><use href="#folder"/></svg><span>PROGRAM</span></div></td><td></td><td></td></tr>
            <tr class="sel"><td class="latin"><div class="cell"><i class="branch end"></i><svg><use href="#check"/></svg><svg><path d="M5 5l5-1 4 3-1 4-4 3-4-3z" fill="#fff" stroke="#222" stroke-width="1.200"/><path d="M1 2l4-2 5 7-4 2z" fill="url(#hatch)" stroke="#334" stroke-width=".6"/></svg><span>VARIABLE_CONT...</span></div></td><td><svg><path d="M5 0h7v14H5z" fill="url(#hatch)" stroke="#3b3f86" stroke-width=".6"/></svg></td><td><svg><use href="#check"/></svg></td></tr>
          </tbody>
        </table>
      </div>
      <div class="scroll"><button aria-label="向左滚动"><svg width="8" height="12"><path d="M6 1L2 6l4 5" fill="none" stroke="#555" stroke-width="2"/></svg></button><div class="track"><i></i></div><button aria-label="向右滚动"><svg width="8" height="12"><path d="M2 1l4 5-4 5" fill="none" stroke="#555" stroke-width="2"/></svg></button></div>
    </div>
    <div class="splitter"></div>
    <button class="fold">相依性<svg width="14" height="12"><path d="M2 1l5 9 5-9" fill="none" stroke="#2b87b8" stroke-width="3"/></svg></button>
    <button class="fold">细节<svg width="14" height="12"><path d="M2 1l5 9 5-9" fill="none" stroke="#2b87b8" stroke-width="3"/></svg></button>
  </aside>
  <section class="view">
    <svg class="scene" role="img" aria-label="三维模型">
      <defs>
        <path id="front" d="M165 213C164 290 160 380 158 440S153 590 156 640Q158 653 163 656"/>
        <path id="behind" d="M167 652C195 590 228 300 251 222"/>
      </defs>
      <g transform="translate(244 366) scale(.3333)" fill="none">
        <path d="M165 213L1047 305L1000 745L120 652z" fill="url(#body)"/>
        <g stroke="url(#back)" stroke-width="3">
          <use href="#behind"/><use href="#behind" x="88" y="9"/><use href="#behind" x="176" y="18"/><use href="#behind" x="264" y="27"/><use href="#behind" x="352" y="36"/><use href="#behind" x="440" y="45"/><use href="#behind" x="528" y="54"/><use href="#behind" x="616" y="63"/><use href="#behind" x="704" y="73"/><use href="#behind" x="792" y="82"/>
        </g>
        <g stroke="#1ce6e6" stroke-width="4">
          <use href="#front"/><use href="#front" x="88" y="9"/><use href="#front" x="176" y="18"/><use href="#front" x="264" y="27"/><use href="#front" x="352" y="36"/><use href="#front" x="440" y="45"/><use href="#front" x="528" y="54"/><use href="#front" x="616" y="63"/><use href="#front" x="704" y="73"/><use href="#front" x="792" y="82"/>
          <path d="M165 213L140 430L119 652M1045 305C1020 430 1012 600 998 744M1047 305L1032 520L1001 745"/>
        </g>
        <path d="M183 67L166 213" stroke="#e3a81c" stroke-width="4"/>
        <path d="M1055 175L1045 305" stroke="#e8cdd3" stroke-width="4"/>
        <path d="M137 445L128 560" stroke="#6f8fe0" stroke-width="9"/>
        <path d="M124 520L110 700" stroke="#0b3df0" stroke-width="7"/>
        <path d="M100 693h22l-15 62z" fill="#0b3df0"/>
        <path d="M150 433L250 440M145 447L390 469" stroke="#8fc98f" stroke-width="6"/>
        <path d="M245 436l35 0 27 11-55-1zM388 461l60 17-62 4z" fill="#aee8a8"/>
        <circle cx="146" cy="430" r="11" fill="#e87b78"/>
      </g>
      <text x="275" y="506" fill="#cc3030">X</text><text x="279" y="506" fill="#cc3030">XC</text>
      <text x="334" y="529" fill="#2f9a36">YC</text><text x="379" y="539" fill="#2f9a36">YM</text>
      <text x="290" y="576" fill="#1549ff">ZC</text><text x="284" y="628" fill="#1549ff">ZM</text>
      <g>
        <path d="M65 750l26 3-2 25-27-3z" fill="#b0b0b0"/>
        <path d="M66 748l32 3" stroke="#2c9c2c" stroke-width="4"/><path d="M96 748l13 4-13 2z" fill="#2cae2c"/>
        <path d="M63 750l-3 32" stroke="#0b3df0" stroke-width="3"/><path d="M57 780h6l-3 12z" fill="#0b3df0"/>
        <text x="61" y="751" fill="#cc3030">X</text>
        <circle cx="65" cy="748" r="4" fill="#ececec"/>
        <text x="110" y="758" fill="#2f9a36">Y</text><text x="56" y="802" fill="#1549ff">Z</text>
      </g>
    </svg>
    <div class="meter"><i></i><i class="green"></i></div>
  </section>
</main>

<div class="status"><strong>刀轨列表有 1007 行。</strong><button aria-label="全屏"><svg class="i16"><use href="#full"/></svg></button></div>

<footer class="taskbar">
  <button aria-label="开始"><svg viewBox="0 0 20 20"><path d="M0 3l8-1v7H0zM9 2l11-2v9H9zM0 10h8v8l-8-1zM9 10h11v10L9 18z"/></svg></button>
  <button aria-label="搜索"><svg viewBox="0 0 20 20"><circle cx="12" cy="8" r="7" fill="none" stroke="#000" stroke-width="2"/><path d="M7 13l-6 6" stroke="#000" stroke-width="2"/></svg></button>
  <button aria-label="Edge"><svg viewBox="0 0 20 20"><circle cx="10" cy="10" r="10" fill="url(#edgeg)"/><path d="M0 10c1-4 9-6 12-1-4 0-4 4-1 6 3 1 6 0 8-1-4 8-18 8-19-4z" fill="#0f5fb8"/><path d="M9 10c2-1 5 0 4 3 3 0 7-1 7-4 0 4-4 6-7 5-3 0-5-2-4-4z" fill="#d9efe4"/></svg></button>
  <button aria-label="浏览器"><svg viewBox="0 0 20 20"><path d="M10 10C4 9 3 3 9 0c7 0 9 4 1 10z" fill="#c44de8"/><path d="M10 10c2-7 8-7 10-1 0 6-5 7-10 1z" fill="#ff5a3c"/><path d="M10 10c7 0 8 6 1 10-6 0-7-5-1-10z" fill="#ffd21c"/><path d="M10 10c0 6-5 9-9 4-1-6 3-8 9-4z" fill="#3ccb4a"/><path d="M10 10C4 12 0 9 1 6c2-4 7-4 9 4z" fill="#3fa4f5"/><circle cx="10" cy="10" r="1.500" fill="#fff"/></svg></button>
  <button class="on" aria-label="NX"><svg viewBox="0 0 20 20"><circle cx="9" cy="12" r="8" fill="url(#ball)"/><path d="M1 18c5 2 17-4 18-10 0-3-3-3-5-2" fill="none" stroke="#f0a020" stroke-width="2"/><path d="M2 2l9-1-2 9z" fill="#c8192f"/></svg></button>
  <div class="tray">
    <svg width="16" height="10"><path d="M1 9l7-7 7 7" fill="none" stroke="#000" stroke-width="1.500"/></svg>
    <svg width="21" height="14"><path d="M6 4h12v9H5V8" fill="none" stroke="#000"/><path d="M7 6h10v6H7z"/><path d="M19 7h1v4h-1M1 3h5v3L4 8v3M2 0v3M5 0v3" stroke="#000" fill="none"/></svg>
    <svg width="16" height="16"><path d="M1 15A14 14 0 0 1 15 1M5 15A10 10 0 0 1 15 5M9 15a6 6 0 0 1 6-6" fill="none" stroke="#222" stroke-width="1.300"/><circle cx="14" cy="14" r="1.500"/></svg>
    <svg width="18" height="14"><path d="M1 5h3l4-4v12L4 9H1zM10 5q2 2 0 4M12 3q4 4 0 8M14 1q6 6 0 12" fill="none" stroke="#111"/></svg>
    <b>英</b><time>18:27</time>
    <svg width="22" height="20"><path d="M1.500 1.500h19v15h-6l-3 3v-3h-10z" fill="none" stroke="#000" stroke-width="1.300"/></svg>
    <i class="desk"></i>
  </div>
  <span class="mark">UG爱好者论坛@小白求技术</span>
</footer>
</body>
</html>
```
FILE: styles.css
```css
* { box-sizing: border-box; }
html, body { height: 100%; }
body {
  margin: 0;
  display: flex;
  flex-direction: column;
  background: #fff;
  color: #1e1e1e;
  font: 14px/20px "Noto Sans", "Noto Sans CJK SC", sans-serif;
  overflow: hidden;
}
button, input, select { font: inherit; color: inherit; }
button { border: 0; background: none; padding: 0; display: flex; align-items: center; justify-content: center; white-space: nowrap; }
a { color: inherit; text-decoration: none; }
h1, h2 { margin: 0; font-weight: 400; }
svg { display: block; flex: none; }
i { font-style: normal; }
.defs { position: absolute; }
.i16 { width: 16px; height: 16px; }
.dd { display: block; flex: none; width: 6px; height: 3px; background: #222; clip-path: polygon(0 0, 100% 0, 50% 100%); }
.sep { flex: none; width: 1px; background: #dcdcdc; }
.on { background: #c8d8d6; }

/* title bar */
.titlebar { display: flex; align-items: center; height: 30px; flex: none; }
.quick { display: flex; align-items: center; flex: none; }
.quick .sep { height: 24px; margin: 0 6px 0 7px; }
.quick .dd { margin-left: 6px; }
.nx { padding-left: 4px; width: 40px; font: bold 24px/30px "Liberation Sans", sans-serif; color: #8299aa; }
.next { margin-left: 6px; }
.window svg { margin-right: 4px; }
.quick .window .dd, .quick .custom .dd { margin-left: 5px; }
.custom .dd { height: 6px; clip-path: polygon(0 0, 100% 0, 100% 1px, 0 1px, 0 3px, 100% 3px, 50% 100%, 0 3px); }
.titlebar h1 { flex: 1; text-align: center; font-size: 15px; color: #000; white-space: pre; }
.brand { font-weight: 700; font-size: 16px; color: #009999; margin-right: 21px; }
.controls { display: flex; align-items: center; gap: 2px; color: #555; margin-right: 2px; }
.controls button { width: 28px; height: 24px; }
.min { width: 8px; height: 2px; margin-top: 10px; background: currentColor; }

/* tab strip */
.tabs { display: flex; align-items: stretch; height: 32px; flex: none; background: #c8d8d6; font-size: 16px; line-height: 31px; }
.tabs > a { padding: 0 13px; }
.file { width: 91px; margin-right: 2px; background: #5a8780; color: #fff; }
.tabs .on { background: #fff; color: #2b87b8; border-top: 1px solid #98aaa8; }
.tabtools { margin-left: auto; display: flex; align-items: center; gap: 11px; font-size: 14px; line-height: 20px; }
.search { display: flex; align-items: center; width: 157px; height: 24px; border: 1px solid #a0a8a8; background: #fff; padding-right: 4px; }
.search input { flex: 1; min-width: 0; border: 0; padding: 0 1px; outline: 0; background: none; }
.search input::placeholder { color: #a8a8a8; opacity: 1; }
.help { width: 14px; height: 14px; border-radius: 7px; background: #3d6fd0; color: #fff; font-weight: 700; font-size: 11px; }
.tutor svg { margin-right: 4px; }
.controls.dark { color: #111; gap: 1px; margin: 0 4px 0 3px; }
.dark button { width: 26px; }

/* ribbon */
.ribbon { display: flex; height: 106px; flex: none; padding: 4px 0; border-bottom: 1px solid #d4d4d4; }
.group { display: flex; flex-direction: column; padding: 1px 0 0; border-right: 1px solid #d8d8d8; }
.items { display: flex; align-items: flex-start; gap: 9px; padding: 0 11px 0 12px; flex: 1; }
.endbox .items { padding-right: 4px; }
.narrow .items { padding: 0; }
.group footer { display: flex; align-items: center; height: 20px; margin-bottom: -4px; color: #2b87b8; white-space: nowrap; }
.group footer span { flex: 1; text-align: center; }
.group footer .dd { margin: 0 9px 0 5px; }
.group.tight footer .dd { margin: 0 7px 0 2px; }
.big { flex-direction: column; }
.big > svg { width: 32px; height: 32px; margin: 0 -2px 5px; }
.big .dd { margin-top: 4px; }
.more { margin-left: 2px; }
.box { display: flex; align-items: center; justify-content: center; width: 38px; height: 34px; margin-bottom: 3px; border: 1px solid #ececec; border-radius: 4px; }
.point { padding: 0 2px; }
.stack { display: grid; gap: 12px; padding-top: 1px; }
.show { display: grid; grid-template-columns: 24px 16px 20px 14px; gap: 2px 1px; align-items: center; align-content: start; }
.narrow .show { padding: 0 4px 0 8px; }
.show button { height: 24px; }
.show .dd { justify-self: center; }
.items.work { padding: 0 9px 0 12px; }
.pairs { display: grid; grid-template-columns: 16px 16px; gap: 10px 9px; padding-top: 2px; }
.list { display: grid; gap: 6px; }
.list button { gap: 5px; justify-content: flex-start; }
.gc { flex-direction: column; }
.narrow .gc { padding: 7px 2px 0 5px; gap: 7px; }
.gc > div { display: flex; align-items: center; }
.gc button { width: 23px; height: 24px; }
.gc .sep { height: 22px; margin: 0 2px; }
.last { margin: auto 6px 5px auto; }

/* selection bar */
.selbar { display: flex; align-items: center; height: 36px; flex: none; border-bottom: 1px solid #8b9496; }
.selbar > .sep { height: 27px; }
.menu { padding: 0 7px 0 10px; }
.menu span { margin: 0 4px; }
.set { display: flex; align-items: center; padding: 0 9px 0 6px; }
.set button { width: 24px; height: 23px; }
.set .on, .show .on { border: 1px solid #9bb5b1; }
.set .dd { margin: 0 3px; }
.spaced { gap: 1px; padding: 0 8px 0 9px; }
.views { padding-left: 8px; }
.views .dd { margin: 0 3px 0 4px; }
.picks { display: flex; gap: 8px; padding-left: 9px; }
.pick { display: grid; width: 167px; height: 24px; border: 1px solid #a0a0a0; }
.wide { width: 176px; }
.pick > * { grid-area: 1 / 1; }
.pick select { appearance: none; border: 0; background: none; padding: 0 3px; outline: 0; width: 100%; }
.pick .dd { align-self: center; justify-self: end; margin-right: 7px; width: 8px; height: 4px; }

/* work area */
main { display: flex; flex: 1; min-height: 0; border-bottom: 1px solid #a6a6a6; }
.rail { width: 32px; flex: none; background: #dcdcdc; border-right: 1px solid #a6a6a6; }
.rail button { width: 32px; height: 42px; padding-left: 4px; }
.rail button svg { width: 24px; height: 24px; }
.rail .cog { width: 30px; height: 26px; margin-bottom: 16px; padding: 0; }
.rail .cog svg { width: 14px; height: 14px; }
.rail .apart { margin-top: 12px; }
.rail .on { background: #fff; border: 1px solid #a6a6a6; border-right: 0; width: 30px; margin-left: 2px; padding-left: 2px; }
.panel { width: 384px; flex: none; display: flex; flex-direction: column; padding: 0 9px 5px 6px; border-right: 1px solid #6f7577; }
.panel > header { display: flex; align-items: center; justify-content: space-between; height: 30px; padding: 3px 7px 0 4px; }
.panel h2 { font-size: 15px; }
.max { width: 14px; height: 13px; border: 1px solid #222; border-top-width: 2px; }
.tree { flex: 1; min-height: 0; display: flex; flex-direction: column; border: 1px solid #d4d4d4; padding: 1px; font-size: 15px; }
.rows {
  flex: 1; min-height: 0; overflow: hidden;
  background:
    linear-gradient(#000, #000) 199px 25px / 1px 100% no-repeat,
    linear-gradient(#e8e8e8, #e8e8e8) 299px 0 / 1px 100% no-repeat,
    repeating-linear-gradient(#fff 0 23px, #e8e8e8 23px 24px, #fafafa 24px 47px, #e8e8e8 47px 48px) 0 25px no-repeat;
}
table { border-collapse: separate; border-spacing: 0; table-layout: fixed; width: 100%; }
.c1 { width: 200px; }
.c2 { width: 100px; }
th { height: 25px; padding: 0 6px; text-align: left; font-weight: 400; background: #efefef; border-bottom: 1px solid #c8c8c8; border-right: 1px solid #c8c8c8; }
th:last-child { border-right: 0; }
td { height: 24px; padding: 0 4px 0 3px; white-space: nowrap; }
td svg { width: 14px; height: 14px; }
.latin { font-size: 16px; }
.cell { display: flex; align-items: center; gap: 2px; height: 24px; margin-right: -4px; }
.cell span { padding-left: 2px; }
.branch { width: 9px; height: 24px; margin: 0 1px 0 5px; border-left: 1px dotted #999; background: linear-gradient(90deg, #999 50%, transparent 50%) 0 12px / 2px 1px repeat-x; }
.end { height: 13px; align-self: flex-start; }
.sel { color: #fff; }
.sel td:not(:first-child), .sel .cell span { background: #3399ff; background-clip: padding-box; border-bottom: 1px solid #e8e8e8; }
.sel .cell span { flex: 1; min-width: 0; line-height: 23px; margin-right: 1px; padding-left: 3px; }
.sel td:nth-child(2) { border-right: 1px solid #e8e8e8; }
.scroll { display: flex; height: 20px; margin-top: 1px; background: #f0f0f0; }
.scroll button { width: 21px; }
.track { flex: 1; }
.track i { display: block; width: 41%; height: 20px; background: #cdcdcd; }
.splitter { height: 6px; margin-top: 1px; border: 1px solid #b0b0b0; background: #e0e0e0; }
.fold { justify-content: space-between; height: 28px; padding: 0 6px 0 7px; font-size: 18px; color: #2b87b8; border-bottom: 2px solid #d4d4d4; }

/* graphics window */
.view { flex: 1; min-width: 0; position: relative; background: linear-gradient(#232527, #434446 45%, #545557 80%, #575859); }
.scene { width: 100%; height: 100%; }
.scene text { font: 13px "Noto Sans", sans-serif; }
.meter { position: absolute; right: 0; top: 70%; width: 18px; height: 53px; padding: 6px; border-radius: 3px 0 0 3px; background: #17181a; display: grid; gap: 4px; }
.meter i { width: 6px; background: linear-gradient(#f0a030, #f0a030) 0 100% / 6px 1px no-repeat, repeating-linear-gradient(#17181a 0 1px, #3c3d3f 1px 2px); }
.meter .green { background: linear-gradient(#7ee028, #7ee028) 0 100% / 6px 1px no-repeat, repeating-linear-gradient(#17181a 0 1px, #3c3d3f 1px 2px); }

/* status line and task bar */
.status { display: flex; align-items: center; height: 22px; flex: none; padding: 0 55px 0 122px; color: #111; }
.status strong { flex: 1; text-align: center; }
.taskbar { position: relative; display: flex; height: 38px; flex: none; background: linear-gradient(90deg, #c9e4d6, #d0ebd4); }
.taskbar > button { width: 47px; border-bottom: 3px solid transparent; padding-top: 3px; }
.taskbar > button:first-child { width: 44px; }
.taskbar > button svg { width: 20px; height: 20px; }
.taskbar .on { margin-left: 1px; background: #e9f4ec; border-color: #24cc2c; }
.tray { display: flex; align-items: center; gap: 13px; margin-left: auto; padding-right: 5px; color: #000; }
.tray b { font-size: 20px; font-weight: 500; margin-left: -2px; }
.tray time { font-size: 15px; margin-right: 10px; }
.desk { width: 1px; height: 100%; margin-left: 10px; background: #9fb8a6; }
.mark { position: absolute; right: 4px; bottom: 2px; font: 16px/20px "Liberation Mono", "Noto Sans CJK SC", monospace; color: #e8efe9; text-shadow: 1px 1px 1px #333; white-space: nowrap; }
```
